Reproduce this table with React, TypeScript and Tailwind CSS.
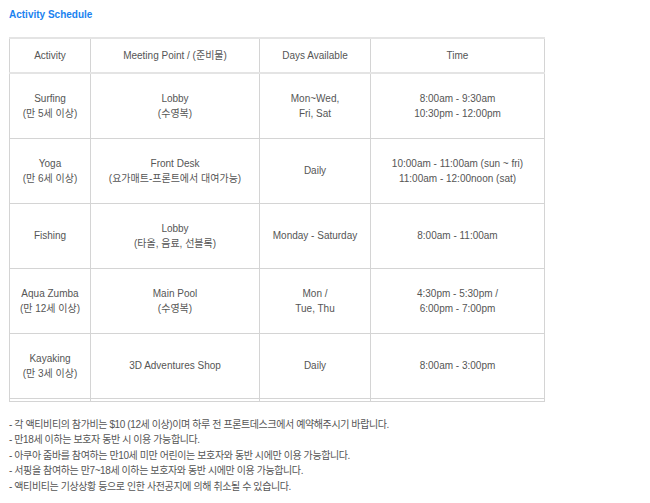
const rows: { activity: string[]; place: string[]; days: string[]; time: string[] }[] = [
  {
    activity: ['Surfing', '(만 5세 이상)'],
    place: ['Lobby', '(수영복)'],
    days: ['Mon~Wed,', 'Fri, Sat'],
    time: ['8:00am - 9:30am', '10:30pm - 12:00pm'],
  },
  {
    activity: ['Yoga', '(만 6세 이상)'],
    place: ['Front Desk', '(요가매트-프론트에서 대여가능)'],
    days: ['Daily'],
    time: ['10:00am - 11:00am (sun ~ fri)', '11:00am - 12:00noon (sat)'],
  },
  {
    activity: ['Fishing'],
    place: ['Lobby', '(타올, 음료, 선블록)'],
    days: ['Monday - Saturday'],
    time: ['8:00am - 11:00am'],
  },
  {
    activity: ['Aqua Zumba', '(만 12세 이상)'],
    place: ['Main Pool', '(수영복)'],
    days: ['Mon /', 'Tue, Thu'],
    time: ['4:30pm - 5:30pm /', '6:00pm - 7:00pm'],
  },
  {
    activity: ['Kayaking', '(만 3세 이상)'],
    place: ['3D Adventures Shop'],
    days: ['Daily'],
    time: ['8:00am - 3:00pm'],
  },
];

const notes = [
  '- 각 액티비티의 참가비는 $10 (12세 이상)이며 하루 전 프론트데스크에서 예약해주시기 바랍니다.',
  '- 만18세 이하는 보호자 동반 시 이용 가능합니다.',
  '- 아쿠아 줌바를 참여하는 만10세 미만 어린이는 보호자와 동반 시에만 이용 가능합니다.',
  '- 서핑을 참여하는 만7~18세 이하는 보호자와 동반 시에만 이용 가능합니다.',
  '- 액티비티는 기상상황 등으로 인한 사전공지에 의해 취소될 수 있습니다.',
];

const Lines = ({ lines }: { lines: string[] }) => (
  <>
    {lines.map((line) => (
      <div key={line}>{line}</div>
    ))}
  </>
);

const cell = 'border border-[#d4d4d4] text-center align-middle px-1';

export default function App() {
  return (
    <div
      className="h-[503px] w-[650px] bg-white pl-[9px] pt-[9px] text-[10px] leading-[15px] text-[#555]"
      style={{ fontFamily: '"Liberation Sans", "Noto Sans CJK KR", sans-serif' }}
    >
      <h2 className="text-[10px] font-bold leading-[12px] text-[#1a82f0]">Activity Schedule</h2>

      <table className="mt-[16px] w-[535px] table-fixed border-collapse border-t-2 border-t-[#e4e4e4]">
        <colgroup>
          <col className="w-[81px]" />
          <col className="w-[169px]" />
          <col className="w-[111px]" />
          <col className="w-[174px]" />
        </colgroup>
        <thead>
          <tr className="h-[35px] border-b-2 border-b-[#e4e4e4]">
            <th className={`${cell} border-t-[#e4e4e4] font-normal`}>Activity</th>
            <th className={`${cell} border-t-[#e4e4e4] font-normal`}>Meeting Point / (준비물)</th>
            <th className={`${cell} border-t-[#e4e4e4] font-normal`}>Days Available</th>
            <th className={`${cell} border-t-[#e4e4e4] font-normal`}>Time</th>
          </tr>
        </thead>
        <tbody>
          {rows.map((row) => (
            <tr key={row.activity[0]} className="h-[65px]">
              <td className={cell}>
                <Lines lines={row.activity} />
              </td>
              <td className={cell}>
                <Lines lines={row.place} />
              </td>
              <td className={cell}>
                <Lines lines={row.days} />
              </td>
              <td className={cell}>
                <Lines lines={row.time} />
              </td>
            </tr>
          ))}
          <tr className="h-[3px]">
            <td className="border border-[#d4d4d4]" />
            <td className="border border-[#d4d4d4]" />
            <td className="border border-[#d4d4d4]" />
            <td className="border border-[#d4d4d4]" />
          </tr>
        </tbody>
      </table>

      <ul className="mt-[15px] leading-[15.5px] tracking-[-0.4px]">
        {notes.map((note) => (
          <li key={note}>{note}</li>
        ))}
      </ul>
    </div>
  );
}
